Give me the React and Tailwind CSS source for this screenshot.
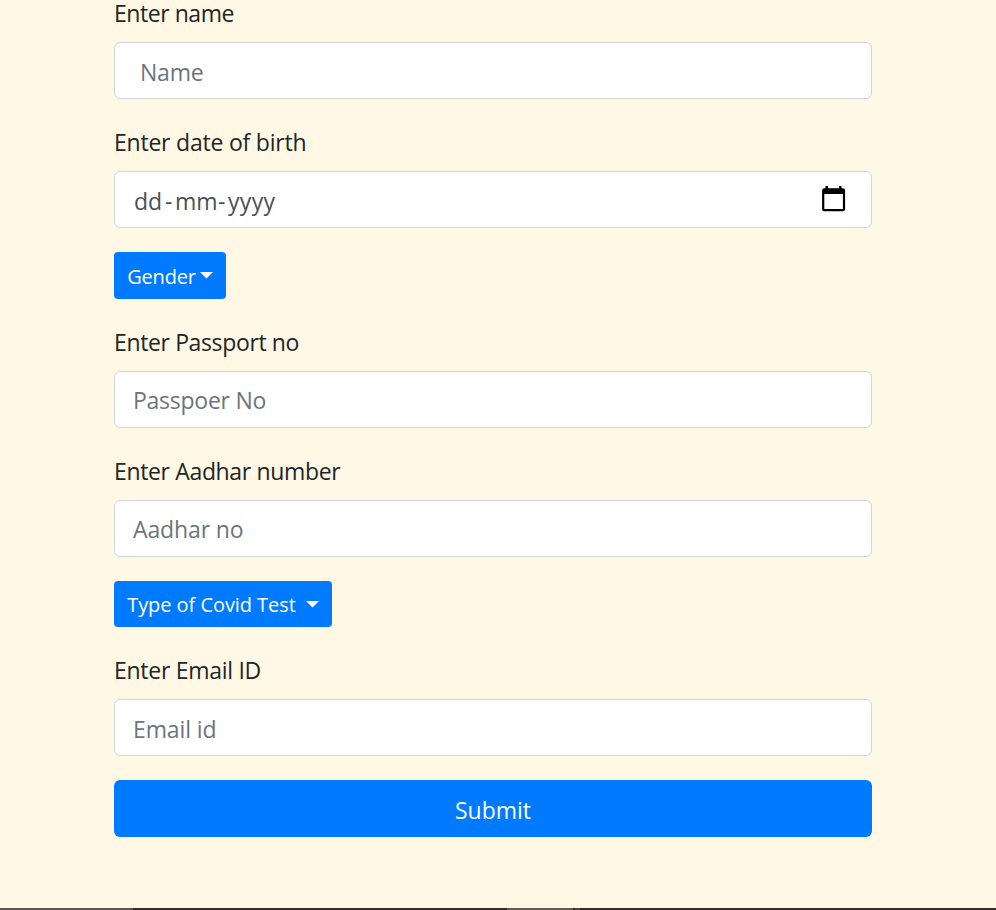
import React from "react";

function Field({ label, labelClass, children }) {
  return (
    <div className="mb-6">
      <label className={`block whitespace-nowrap text-[23px] text-[#212529] ${labelClass}`}>
        {label}
      </label>
      <div className="flex h-[57px] items-center rounded-md border border-[#ced4da] bg-white pl-[18px] pr-[25px] text-[23px] leading-[35px] text-[#6c757d]">
        {children}
      </div>
    </div>
  );
}

function Caret({ className }) {
  return (
    <svg className={`h-[7px] w-[13px] shrink-0 ${className}`} viewBox="0 0 13 7" fill="#fff">
      <path d="M0 0h13L6.5 6.5z" />
    </svg>
  );
}

function Calendar() {
  return (
    <svg className="-mt-0.5 ml-auto h-[26px] w-6" viewBox="0 0 24 26" fill="none">
      <path d="M4.7 0v4M18.3 0v4" stroke="#000" strokeWidth="2.4" />
      <rect x="1.2" y="3.4" width="20.8" height="20.8" rx="1.2" stroke="#000" strokeWidth="2.2" />
      <path d="M1 3h21.2v5H1z" fill="#000" />
    </svg>
  );
}

export default function App() {
  return (
    <div className="flex h-[910px] w-[996px] flex-col overflow-hidden bg-[#fff8e4] font-['Open_Sans','Noto_Sans',sans-serif]">
      <form className="ml-[114px] w-[758px]" onSubmit={(e) => e.preventDefault()}>
        <Field label="Enter name" labelClass="h-[42px] leading-[27px] tracking-[-0.45px]">
          <span className="ml-[7px] mt-1 tracking-[-0.2px]">Name</span>
        </Field>
        <Field label="Enter date of birth" labelClass="h-12 leading-[39px] tracking-[-0.22px]">
          <span className="ml-px mt-1 flex text-[#495057]">
            <span className="w-[31px]">dd</span>
            <span className="w-2.5">-</span>
            <span className="w-[43px]">mm</span>
            <span className="w-2.5">-</span>
            <span className="tracking-[0.3px]">yyyy</span>
          </span>
          <Calendar />
        </Field>
        <button type="button" className="mb-6 flex h-[47px] w-28 items-center whitespace-nowrap rounded bg-[#007bff] pl-[13px] text-[20px] text-white">
          <span className="mt-0.5 w-[69px] tracking-[-0.2px]">Gender</span>
          <Caret className="ml-1" />
        </button>
        <Field label="Enter Passport no" labelClass="h-12 leading-[39px] tracking-[-0.37px]">
          <span className="mt-0.5 tracking-[-0.25px]">Passpoer No</span>
        </Field>
        <Field label="Enter Aadhar number" labelClass="h-12 leading-[39px] tracking-[-0.35px]">
          <span className="mt-0.5 tracking-[-0.12px]">Aadhar no</span>
        </Field>
        <button type="button" className="mb-6 flex h-[46px] w-[218px] items-center whitespace-nowrap rounded bg-[#007bff] pl-[13px] text-[20px] text-white">
          <span className="mt-0.5 w-[169px] tracking-[-0.06px]">Type of Covid Test</span>
          <Caret className="ml-2.5" />
        </button>
        <Field label="Enter Email ID" labelClass="h-12 leading-[39px] tracking-[-0.28px]">
          <span className="mt-1 tracking-[-0.12px]">Email id</span>
        </Field>
        <button type="submit" className="flex h-[57px] w-full items-center justify-center rounded-md bg-[#007bff] pt-1 text-[23px] text-white">
          <span>Submit</span>
        </button>
      </form>
      <div className="mt-auto flex h-0.5 bg-[#312e29]">
        <div className="w-[133px] bg-[#5d5753]" />
        <div className="ml-[374px] w-[66px] bg-[#625d54]" />
        <div className="ml-0.5 w-[5px] bg-[#4b463f]" />
      </div>
    </div>
  );
}
